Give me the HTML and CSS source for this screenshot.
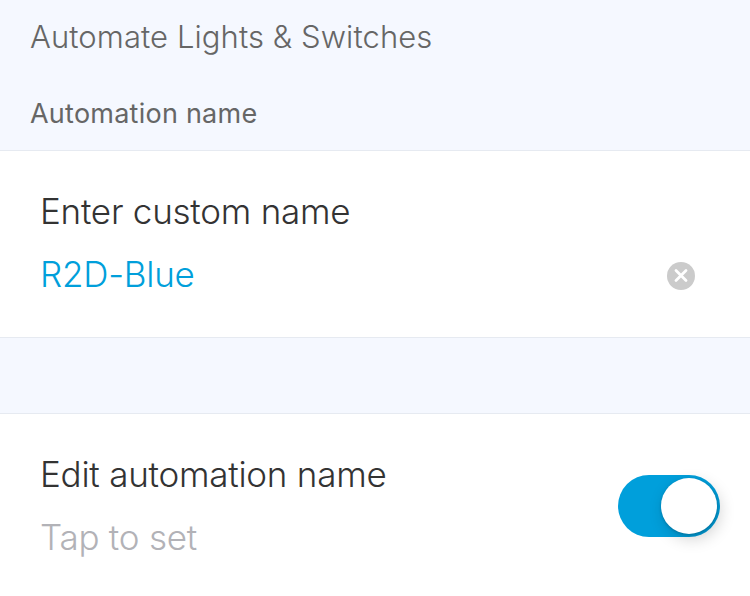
FILE: index.html
```
<!DOCTYPE html>
<html lang="en">
<head>
    <meta charset="UTF-8">
    <meta name="viewport" content="width=device-width, initial-scale=1.0">
    <title>Automate Lights &amp; Switches</title>
    <link rel="stylesheet" href="styles.css">
</head>
<body>
    <div class="header">
        <h1>Automate Lights &amp; Switches</h1>
        <h2>Automation name</h2>
    </div>

    <div class="card name-card">
        <div class="card-text">
            <p class="label">Enter custom name</p>
            <p class="value">R2D-Blue</p>
        </div>
        <button class="clear-button" aria-label="Clear">
            <svg width="28" height="28" viewBox="0 0 28 28">
                <circle cx="14" cy="14" r="14" fill="#cbcbcb" />
                <path d="M9 8.5 L19 18.5 M19 8.5 L9 18.5" stroke="#fff" stroke-width="2.8" stroke-linecap="round" />
            </svg>
        </button>
    </div>

    <div class="card edit-card">
        <div class="card-text">
            <p class="label">Edit automation name</p>
            <p class="value placeholder">Tap to set</p>
        </div>
        <button class="toggle" role="switch" aria-checked="true" aria-label="Edit automation name">
            <span class="knob"></span>
        </button>
    </div>
</body>
</html>
```
FILE: styles.css
```
* {
    margin: 0;
    padding: 0;
    box-sizing: border-box;
    font-family: Inter, 'Open Sans', sans-serif;
}

body {
    background: #f5f8ff;
    color: #333;
    height: 596px;
    display: flex;
    flex-direction: column;
    overflow: hidden;
}

.header {
    height: 150px;
    padding: 17px 30px 0;
    color: #666;
}

.header h1 {
    font-size: 31px;
    font-weight: 300;
    line-height: 40px;
    letter-spacing: 0.08px;
}

.header h2 {
    margin-top: 37px;
    font-size: 27px;
    font-weight: 380;
    line-height: 40px;
    letter-spacing: 0.24px;
}

.card {
    display: flex;
    justify-content: space-between;
    background: #fff;
    border-top: 1px solid #e6eaf1;
    padding-left: 40px;
}

.name-card {
    height: 188px;
    border-bottom: 1px solid #e6eaf1;
    padding-top: 35px;
    padding-right: 55px;
}

.edit-card {
    flex-grow: 1;
    margin-top: 75px;
    padding-top: 35px;
    padding-right: 30px;
}

.label,
.value {
    font-size: 35px;
    font-weight: 300;
    line-height: 50px;
    letter-spacing: -0.24px;
}

.value {
    margin-top: 13px;
    color: #009fdb;
}

.placeholder {
    color: #b2b2b7;
}

button {
    border: none;
    background: none;
    cursor: pointer;
}

.clear-button {
    width: 28px;
    height: 28px;
    margin-top: 76px;
}

.clear-button svg {
    display: block;
}

.toggle {
    display: flex;
    justify-content: flex-end;
    width: 102px;
    height: 62px;
    margin-top: 26px;
    padding: 3px;
    border-radius: 31px;
    background: #009fdb;
}

.knob {
    width: 56px;
    height: 56px;
    border-radius: 50%;
    background: #fff;
    box-shadow: 0 1px 3px rgba(0, 0, 0, 0.2), 3px 5px 16px rgba(0, 0, 0, 0.18);
}
```
